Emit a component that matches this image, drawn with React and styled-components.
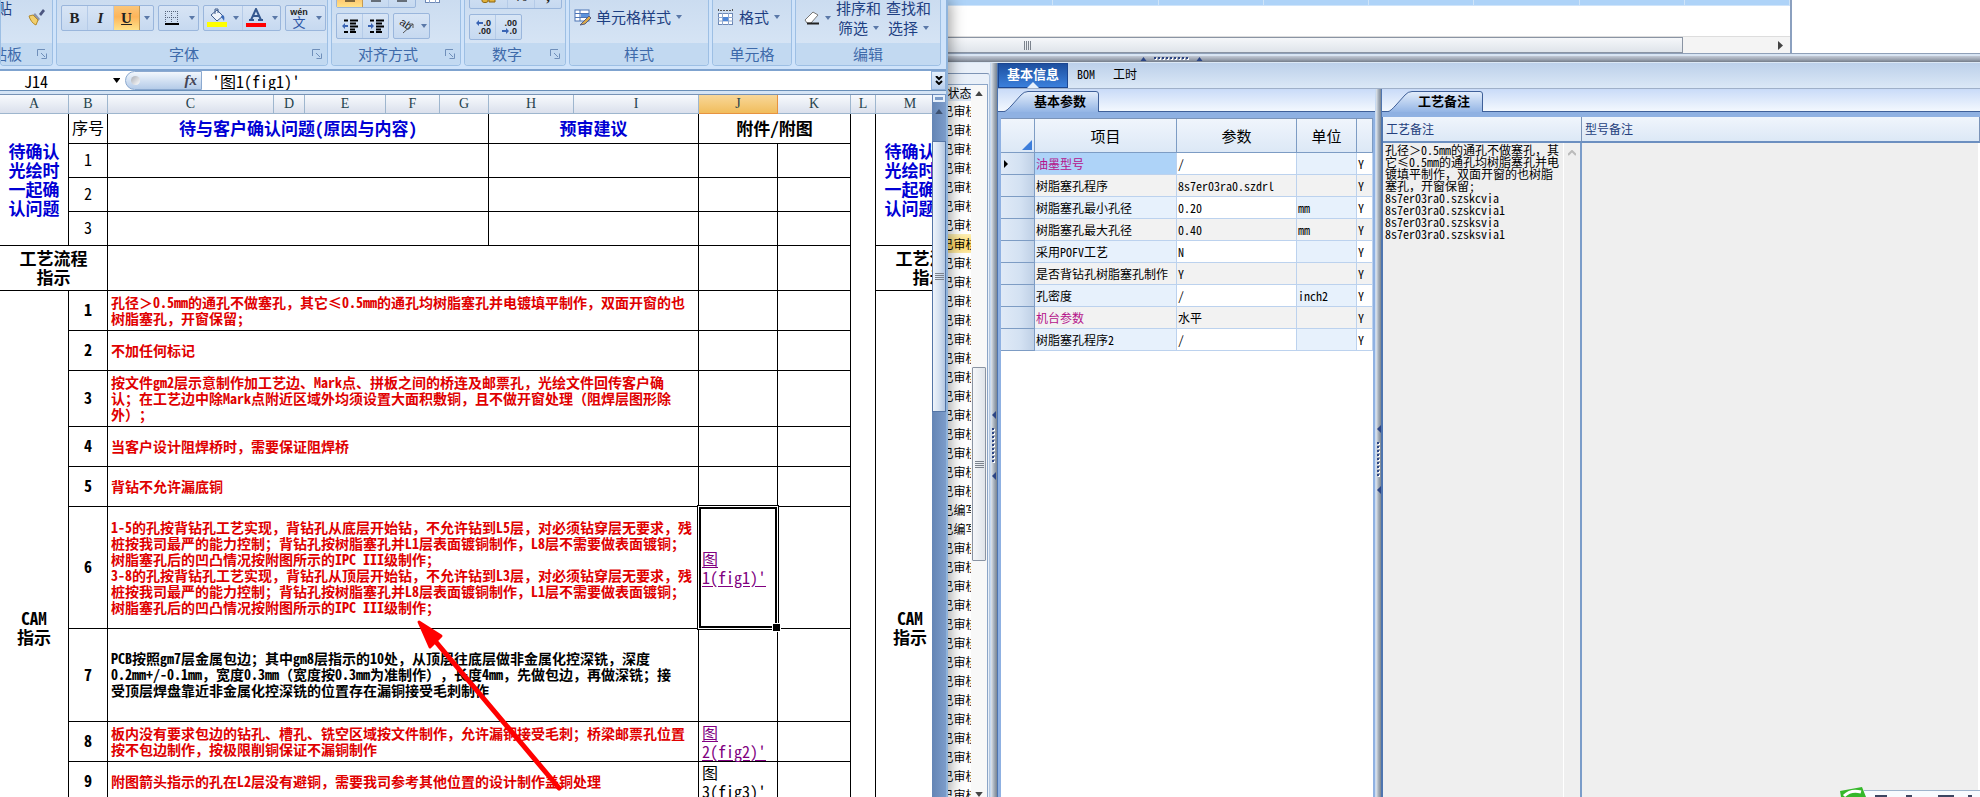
import React, { useState } from 'react';
import styled, { createGlobalStyle, css } from 'styled-components';

const GlobalStyle = createGlobalStyle`
  * {
    box-sizing: border-box;
  }
  body {
    margin: 0;
    overflow: hidden;
    background: #fff;
    font-family: "Noto Sans Mono CJK SC", "Noto Sans CJK SC", monospace;
    font-size: 12px;
    color: #000;
    text-spacing-trim: space-all;
  }
  button, input, textarea {
    font: inherit;
    color: inherit;
    border: 0;
    padding: 0;
    margin: 0;
    background: none;
    border-radius: 0;
    outline: none;
  }
`;

const Desktop = styled.div`
  display: grid;
  grid-template-columns: minmax(0, 948fr) minmax(0, 1032fr);
  height: 100vh;
  overflow: hidden;
  position: relative;
`;

/* ---------- spreadsheet window ---------- */

const SheetWindow = styled.section`
  display: flex;
  flex-direction: column;
  min-height: 0;
  border-right: 2px solid #8fb4dc;
  background: #fff;
  box-shadow: 2px 0 14px rgba(0, 0, 0, 0.4);
  position: relative;
  z-index: 2;
`;

const Ribbon = styled.header`
  display: flex;
  flex: none;
  gap: 3px;
  height: 71px;
  padding-bottom: 3px;
  overflow: hidden;
  background: #cfe3fa;
  border-bottom: 2px solid #7fa3cf;
`;

const Group = styled.div`
  display: flex;
  flex-direction: column;
  flex: none;
  width: ${({ $width }) => $width}px;
  height: 66px;
  overflow: hidden;
  border: 1px solid #9dbfe4;
  border-top: 0;
  border-radius: 0 0 4px 4px;
  background: linear-gradient(#cbdcf0, #dbe8f7);
`;

const GroupBody = styled.div`
  display: flex;
  flex-direction: column;
  justify-content: flex-end;
  gap: 5px;
  height: 43px;
  padding: 0 4px ${({ $bottom = 4 }) => $bottom}px;
  overflow: hidden;
`;

const GroupLabel = styled.div`
  display: flex;
  align-items: center;
  height: 22px;
  background: #c2d9f1;
  color: #3e6aaa;
  font-size: 15px;
  line-height: 22px;

  span {
    flex: 1;
    text-align: center;
    white-space: nowrap;
  }
`;

const Launcher = styled.button`
  display: flex;
  width: 12px;
  height: 12px;
  margin-right: 4px;
`;

const ToolRow = styled.div`
  display: flex;
  align-items: center;
  gap: 4px;
`;

const ToolSet = styled.div`
  display: flex;
  flex: none;
  height: 26px;
  border: 1px solid #9ab6dc;
  border-radius: 2px;
  background: linear-gradient(#d8e5f5, #c6d9f0);
`;

const ToolButton = styled.button`
  display: flex;
  align-items: center;
  justify-content: center;
  width: ${({ $width = 26 }) => $width}px;
  height: 24px;
  border-right: ${({ $last }) => ($last ? 0 : '1px solid #b5cbe8')};
  ${({ $active }) => $active && css`
    background: linear-gradient(#fbc67a, #fdb55a 45%, #ffe28a);
    border-right: 1px solid #c59a52;
  `}
`;

const Glyph = styled.span`
  font-family: "Liberation Serif", serif;
  font-size: 15px;
  line-height: 16px;
  font-weight: bold;
  color: #222;
  font-style: ${({ $italic }) => ($italic ? 'italic' : 'normal')};
  text-decoration: ${({ $underline }) => ($underline ? 'underline' : 'none')};
`;

const Command = styled.button`
  display: flex;
  align-items: center;
  gap: 5px;
  color: #1e3f82;
  font-size: 15px;
  line-height: 20px;
  white-space: nowrap;
`;

const StackedCommand = styled(Command)`
  flex-direction: column;
  gap: 0;

  span {
    display: flex;
    align-items: center;
    gap: 5px;
  }
`;

const FormulaBar = styled.div`
  display: flex;
  flex: none;
  align-items: stretch;
  height: 20px;
  border-bottom: 1px solid #6a8fb8;
  background: #fff;
  font-size: 16px;
`;

const NameBox = styled.label`
  display: flex;
  align-items: center;
  width: 125px;
  padding-right: 5px;

  input {
    width: 100%;
    padding-left: 24px;
    font-size: 16px;
    line-height: 18px;
  }
`;

const FxPill = styled.div`
  display: flex;
  align-items: center;
  justify-content: space-between;
  width: 77px;
  padding: 0 4px 0 5px;
  border: 1px solid #8ba9d0;
  border-radius: 10px 0 0 10px;
  background: linear-gradient(#f2f7fd, #b4cbe8);
  font: italic bold 15px "Liberation Serif", serif;
  color: #445;
`;

const Knob = styled.i`
  width: 9px;
  height: 9px;
  border-radius: 50%;
  background: linear-gradient(135deg, #a9adb5, #fff);
`;

const FormulaInput = styled.input`
  flex: 1;
  min-width: 0;
  padding-left: 10px;
  font-size: 16px;
`;

const ExpandButton = styled.button`
  display: flex;
  align-items: center;
  justify-content: center;
  width: 15px;
  border: 1px solid #8fb0da;
  background: linear-gradient(#e4effb, #b8cfee);
`;

const SheetArea = styled.div`
  display: flex;
  flex: 1;
  min-height: 0;
  padding-top: 3px;
  background: #d5e4f5;
`;

const SheetViewport = styled.div`
  flex: 1;
  min-width: 0;
  overflow: hidden;
  border-top: 1px solid #7792b5;
  background: #fff;
`;

const SheetTable = styled.table`
  table-layout: fixed;
  width: 984px;
  border-collapse: separate;
  border-spacing: 0;
`;

const ColumnHead = styled.th`
  height: 19px;
  padding: 0;
  font-family: "Liberation Serif", serif;
  font-size: 14px;
  line-height: 18px;
  font-weight: normal;
  color: #24424c;
  border-right: 1px solid ${({ $active }) => ($active ? '#e79340' : '#9eb6ce')};
  border-bottom: 1px solid ${({ $active }) => ($active ? '#e79340' : '#9eb6ce')};
  background: ${({ $active }) =>
    $active ? 'linear-gradient(#f8d799, #f1bd5c)' : 'linear-gradient(#f8fafd, #dae0ec)'};
`;

const SheetRow = styled.tr`
  height: ${({ $height }) => $height}px;
`;

const Cell = styled.td`
  position: relative;
  padding: 0 0 2px;
  text-align: center;
  vertical-align: middle;
  font-size: 16px;
  line-height: 19px;
  white-space: pre;
  font-weight: ${({ $bold }) => ($bold ? 'bold' : 'normal')};
  border-right: 1px solid #000;
  border-bottom: ${({ $open }) => ($open ? '0' : '1px solid #000')};
`;

const TitleCell = styled(Cell)`
  font-size: 17px;
  font-weight: bold;
  color: ${({ $color = '#0000d4' }) => $color};
`;

const NoteCell = styled(Cell)`
  padding-left: 3px;
  text-align: left;
  font-size: 14px;
  line-height: 16px;
  font-weight: bold;
  color: ${({ $color = '#e00000' }) => $color};
`;

const LinkCell = styled(Cell)`
  padding: 0 0 0 3px;
  text-align: left;
  ${({ $selected }) => $selected && css`
    z-index: 1;

    &::before {
      content: '';
      position: absolute;
      right: -4px;
      bottom: -4px;
      z-index: 1;
      width: 7px;
      height: 7px;
      border: 1px solid #fff;
      background: #000;
    }
    &::after {
      content: '';
      position: absolute;
      inset: -2px;
      border: 1px solid #000;
      box-shadow: inset 0 0 0 1px #fff, inset 0 0 0 3px #000;
    }
  `}

  a {
    color: ${({ $plain }) => ($plain ? '#000' : '#800080')};
    text-decoration: ${({ $plain }) => ($plain ? 'none' : 'underline')};
    text-underline-offset: 2px;
  }
`;

const SheetScroll = styled.div`
  display: flex;
  flex-direction: column;
  align-items: center;
  width: 14px;
  background: linear-gradient(90deg, #6485b5, #7c9cca);
`;

const SplitHandle = styled.div`
  width: 12px;
  height: 7px;
  margin: 1px 0 7px;
  border: 2px solid #e6f0fb;
  background: #7a9bc8;
`;

const SheetThumb = styled.div`
  display: flex;
  align-items: center;
  justify-content: center;
  width: 14px;
  height: 271px;
  margin-top: 27px;
  border: 1px solid #5576a6;
  background: linear-gradient(90deg, #eef4fb, #d6e2f1 50%, #b4c8e2);
`;

/* ---------- engineering system window ---------- */

const SystemWindow = styled.section`
  display: flex;
  flex-direction: column;
  min-width: 0;
  min-height: 0;
  background: #e4edf8;
`;

const TopPane = styled.div`
  flex: none;
  height: 56px;
  background: #fff;
  border-bottom: 1px solid #5d6e88;
`;

const TopList = styled.div`
  width: calc(100% - 188px);
  height: 53px;
  border-right: 2px solid #8ba0bf;
`;

const TopSelected = styled.div`
  display: flex;
  height: 6px;
  background: #aed3f8;
  border-bottom: 1px solid #cfe4fa;

  i {
    flex: 1;
    border-right: 1px solid #cfe4f8;
  }
`;

const HorizontalScroll = styled.div`
  display: flex;
  align-items: center;
  justify-content: space-between;
  height: 17px;
  margin-top: 30px;
  padding-right: 7px;
  background: #f4f4f4;
  border-top: 1px solid #ddd;
`;

const HorizontalThumb = styled.div`
  display: flex;
  align-items: center;
  justify-content: center;
  width: 88%;
  height: 16px;
  padding-right: 574px;
  border: 1px solid #8a94a3;
  border-left: 0;
  background: linear-gradient(#f5f7fa, #dfe4ea);
`;

const PaneLines = styled.div`
  height: 3px;
  border-top: 1px solid #8fa0b8;
  background: #d8e4f2;
`;

const RowSplitter = styled.div`
  display: flex;
  flex: none;
  align-items: center;
  height: 7px;
  padding-left: 192px;
  gap: 7px;
  background: linear-gradient(#c3cad6, #98a0ad 60%, #747d8a);
  border-bottom: 1px solid #dce8f5;
`;

const Workspace = styled.div`
  display: flex;
  flex: 1;
  min-height: 0;
`;

const StatusPane = styled.aside`
  display: flex;
  flex: none;
  flex-direction: column;
  width: 42px;
  padding-top: 10px;
  background: #e9f0f9;
`;

const StatusFrame = styled.div`
  display: flex;
  flex: 1;
  min-height: 0;
  padding: 10px 0 0;
  border-top: 1px solid #7d94b5;
  border-right: 1px solid #b3c7e0;
  border-top-right-radius: 3px;
`;

const StatusList = styled.div`
  width: 23px;
  overflow: hidden;
  border-top: 1px solid #8ba5c8;
  background: #fff;
`;

const StatusItem = styled.div`
  display: flex;
  align-items: center;
  justify-content: center;
  height: 19px;
  overflow: hidden;
  font-size: 12px;
  line-height: 18px;
  white-space: nowrap;
  background: ${({ $active }) => ($active ? 'linear-gradient(#fdf0b8, #ffd75f 60%, #fbe9a8)' : '#fff')};
`;

const StatusHead = styled(StatusItem)`
  height: 16px;
  background: linear-gradient(#f4f8fd, #dbe6f4);
`;

const StatusScroll = styled.div`
  display: flex;
  flex-direction: column;
  align-items: center;
  width: 17px;
  padding-top: 6px;
  border-top: 1px solid #8ba5c8;
  border-right: 1px solid #8ba5c8;
  background: #f8f8f8;
`;

const StatusThumb = styled.div`
  display: flex;
  flex: none;
  align-items: center;
  justify-content: center;
  width: 14px;
  height: 194px;
  margin: 271px 0 231px;
  border: 1px solid #8a94a3;
  border-radius: 1px;
  background: linear-gradient(90deg, #f5f7fa, #dfe4ea);
`;

const ColumnSplitter = styled.div`
  display: flex;
  flex: none;
  flex-direction: column;
  align-items: center;
  gap: 9px;
  width: ${({ $width }) => $width}px;
  padding-top: ${({ $top }) => $top}px;
  border-left: 1px solid #c7daf2;
  border-right: 1px solid #4e75b0;
  background: linear-gradient(90deg, #dfe6ee, #a5afbb 50%, #7a8592);
`;

const Main = styled.div`
  display: flex;
  flex: 1;
  flex-direction: column;
  min-width: 0;
`;

const MainTabs = styled.nav`
  display: flex;
  flex: none;
  height: 26px;
  border-bottom: 1px solid #9fb0c9;
  background: linear-gradient(#bcd0ea, #dbe8f6);
`;

const MainTab = styled.button`
  position: relative;
  padding: 0 ${({ $pad = 10 }) => $pad}px 3px;
  font-size: ${({ $active }) => ($active ? 13 : 12)}px;
  line-height: 20px;
  ${({ $active }) => $active && css`
    color: #fff;
    font-weight: bold;
    border: 1px solid #1c4690;
    background: linear-gradient(#1d4f9f, #3b80dc);

    &::after {
      content: '';
      position: absolute;
      left: 50%;
      bottom: -1px;
      margin-left: -6px;
      border: 6px solid transparent;
      border-top: 0;
      border-bottom-color: #e6effb;
    }
  `}
`;

const Panels = styled.div`
  display: grid;
  flex: 1;
  grid-template-columns: minmax(0, 377fr) 7px minmax(0, 598fr);
  min-height: 0;
`;

const Panel = styled.div`
  display: flex;
  flex-direction: column;
  min-width: 0;
  min-height: 0;
`;

const PanelTabs = styled.div`
  display: flex;
  align-items: flex-end;
  flex: none;
  height: 23px;
  padding-left: 5px;
  border-bottom: 1px solid #3f6099;
  background: linear-gradient(#c9dbf8, #f3f8fe);
`;

const PanelTab = styled.button`
  position: relative;
  width: 96px;
  height: 21px;
  margin-bottom: -1px;
  padding: 0 0 2px 31px;
  text-align: left;
  font-size: 13px;
  line-height: 18px;
  font-weight: bold;

  svg {
    position: absolute;
    left: 0;
    top: 0;
  }
  span {
    position: relative;
  }
`;

const PanelBody = styled.div`
  display: flex;
  flex: 1;
  flex-direction: column;
  min-height: 0;
  padding: 6px 2px 0 3px;
  background: #8fb1e2;
`;

const ParamSurface = styled.div`
  flex: 1;
  border-top: 1px solid #7a93b8;
  background: #fff;
`;

const ParamTable = styled.table`
  table-layout: fixed;
  width: 100%;
  border-collapse: separate;
  border-spacing: 0;
`;

const ParamHead = styled.th`
  height: 34px;
  padding: 0;
  font-size: 15px;
  font-weight: normal;
  vertical-align: ${({ $corner }) => ($corner ? 'bottom' : 'middle')};
  text-align: ${({ $corner }) => ($corner ? 'right' : 'center')};
  line-height: ${({ $corner }) => ($corner ? 1 : '32px')};
  border-right: 1px solid #7d9cc4;
  border-bottom: 1px solid #7d9cc4;
  background: linear-gradient(#f0f5fc, #dce8f6);

  svg {
    display: block;
    margin: 0 2px 2px auto;
  }
`;

const ParamCell = styled.td`
  height: 22px;
  padding: 0 0 0 1px;
  font-size: 12px;
  line-height: 21px;
  white-space: nowrap;
  overflow: hidden;
  color: ${({ $accent }) => ($accent ? '#b5128a' : '#000')};
  border-right: 1px solid #bcd2ee;
  border-bottom: 1px solid #bcd2ee;
  background: ${({ $bg }) => $bg};
`;

const RowHeadCell = styled(ParamCell)`
  padding-left: 3px;
  border-color: #7d9cc4;
  background: linear-gradient(90deg, #e0eaf7, #d3e1f2 60%, #bfd0e6);

  svg {
    display: block;
  }
`;

const RemarkBody = styled.div`
  display: grid;
  flex: 1;
  grid-template-columns: 199px minmax(0, 1fr);
  grid-template-rows: 26px minmax(0, 1fr);
  margin-top: 5px;
  border-left: 1px solid #4e75b0;
  background: #efefef;
`;

const RemarkFrame = styled(PanelBody)`
  padding: 0;
`;

const RemarkHead = styled.label`
  padding-left: 3px;
  font-size: 12px;
  line-height: 24px;
  color: #243f7d;
  border-right: 1px solid #7a93b8;
  border-bottom: 2px solid #6c8fc0;
  background: linear-gradient(#f0f5fc, #dce8f6);
`;

const RemarkField = styled.div`
  display: flex;
  border-right: 2px solid ${({ $last }) => ($last ? '#fff' : '#7a9cc9')};
`;

const RemarkText = styled.textarea`
  flex: 1;
  min-width: 0;
  padding: 1px 0 0 2px;
  resize: none;
  overflow: hidden;
  white-space: pre;
  font-size: 12px;
  line-height: 12px;
`;

const RemarkScroll = styled.div`
  display: flex;
  justify-content: center;
  width: 17px;
  padding-top: 7px;
  border-left: 1px solid #fff;
`;

const Arrow = styled.svg`
  position: absolute;
  left: 410px;
  top: 614px;
  z-index: 3;
  pointer-events: none;
`;

const InputMethodBar = styled.div`
  position: absolute;
  right: 0;
  bottom: 0;
  z-index: 3;
  display: flex;
  width: 140px;
  height: 10px;
  overflow: hidden;

  svg {
    flex: none;
  }
`;

const Caret = ({ color = '#5a78a8', size = 6, up }) => (
  <svg width={size} height={size / 2 + 1} viewBox="0 0 6 4">
    <path d={up ? 'M0 4h6L3 0z' : 'M0 0h6L3 4z'} fill={color} />
  </svg>
);

const LeftMark = () => (
  <svg width="4" height="8" viewBox="0 0 4 8">
    <path d="M4 0v8L0 4z" fill="#2c4585" />
  </svg>
);

const Grip = ({ vertical = false }) => (
  <svg width="9" height="9">
    {[1, 3, 5, 7].map(n => (
      <path key={n} d={vertical ? `M${n + 0.5} 0v9` : `M0 ${n + 0.5}h9`} stroke="#7b828c" />
    ))}
  </svg>
);

const Dots = ({ vertical }) => (
  <svg width={vertical ? 4 : 35} height={vertical ? 35 : 4}>
    {[...Array(9)].map((_, i) => (
      <g key={i} transform={vertical ? `translate(0 ${i * 4})` : `translate(${i * 4} 0)`}>
        <rect x="1" y="1" width="2" height="2" fill="#fff" />
        <rect width="2" height="2" fill="#2c4585" />
      </g>
    ))}
  </svg>
);

const LaunchIcon = () => (
  <svg width="12" height="12" viewBox="0 0 12 12" fill="none" stroke="#6f8fba">
    <path d="M1.5 8V1.5H9M5 5l4 4M10.5 5.5v5h-5" />
  </svg>
);

const BrushIcon = () => (
  <svg width="18" height="18" viewBox="0 0 18 18">
    <path d="M11 6l4-5 2 2-4 5z" fill="#4c5680" />
    <path d="M7 5l5 6-2 2-6-5z" fill="#8d94a8" />
    <path d="M1 8l4-1 5 5-2 5C5 16 2 12 1 8z" fill="#f2cf6c" stroke="#b58a2a" />
  </svg>
);

const BorderIcon = () => (
  <svg width="14" height="14" viewBox="0 0 14 14" fill="none" stroke="#56647c">
    <path d="M.5 0v13M6.5 0v13M12.5 0v13M0 .5h13M0 6.5h13" strokeDasharray="1 1" />
    <path d="M0 13h14" stroke="#000" strokeWidth="2" />
  </svg>
);

const FillIcon = () => (
  <svg width="22" height="20" viewBox="0 0 22 20">
    <path d="M5 7l6-5 6 6-6 5z" fill="#eef3fa" stroke="#3f5c8d" />
    <path d="M9 6V1h3v4" fill="none" stroke="#3f5c8d" />
    <path d="M16 7c2 0 3 2 2 6-1-2-2-3-3-4z" fill="#3c6bb8" />
    <rect x="1" y="14" width="20" height="5" fill="#ff0" />
  </svg>
);

const FontColorIcon = () => (
  <svg width="22" height="20" viewBox="0 0 22 20">
    <path d="M6 12l5-11 5 11M8 8h6M4 12h5M13 12h5" fill="none" stroke="#35588f" strokeWidth="2" />
    <rect x="1" y="15" width="20" height="4" fill="#f00" />
  </svg>
);

const PhoneticIcon = styled.span`
  display: flex;
  flex-direction: column;
  align-items: center;
  font-size: 13px;
  line-height: 11px;
  color: #2d55a5;

  small {
    font: bold 9px/7px "Liberation Sans", sans-serif;
    color: #222;
  }
`;

const LinesIcon = ({ flip, plain }) => (
  <svg width="16" height="14" viewBox="0 0 16 14">
    {plain ? (
      <path d="M1 1.5h14M1 5.500h9M1 9.5h14M3 13h10" stroke="#000" fill="none" />
    ) : (
      <>
        <path d="M2 1.5h4M8 1.5h8M8 4.5h6M8 7.5h8M8 10.5h5M2 13h4M8 13h6" stroke="#000" strokeWidth="2" fill="none" />
        <path d={flip ? 'M6 7L3 4v2H0v2h3v2z' : 'M0 7l3-3v2h3v2H3v2z'} fill="#3a64b4" />
      </>
    )}
  </svg>
);

const AngleIcon = () => (
  <svg width="17" height="16" viewBox="0 0 17 16">
    <text x="1" y="9" transform="rotate(35 6 7)" fontSize="11" fontFamily="Liberation Sans" fill="#222">ab</text>
    <path d="M5 15L15 6M15 10V6h-4" fill="none" stroke="#555" />
  </svg>
);

const DecimalIcon = styled.span`
  display: flex;
  flex-direction: column;
  align-items: flex-end;
  width: 17px;
  font: bold 9px/8px "Liberation Sans", sans-serif;
  color: #222;

  span {
    display: flex;
    align-items: center;
  }
`;

const DecimalArrow = ({ right }) => (
  <svg width="7" height="6" viewBox="0 0 7 6">
    <path d={right ? 'M7 3L4 0v2H0v2h4v2z' : 'M0 3l3-3v2h4v2H3v2z'} fill="#3a64b4" />
  </svg>
);

const StyleIcon = () => (
  <svg width="17" height="17" viewBox="0 0 17 17">
    <rect x="1" y="1" width="14" height="11" fill="#fff" stroke="#4d74b5" />
    <path d="M1 4.5h14M1 8.5h14M6 1v11" stroke="#4d74b5" fill="none" />
    <path d="M7 5h8v3H7z" fill="#5d93dc" />
    <path d="M15 7l-6 6-3 3 5-1 6-6z" fill="#d9a84a" stroke="#5a5f7c" />
  </svg>
);

const FormatIcon = () => (
  <svg width="17" height="17" viewBox="0 0 17 17">
    <path d="M1.5 0v3M15.5 0v3M3 1.5h11" stroke="#555" strokeDasharray="2 1" fill="none" />
    <rect x="1.5" y="4.5" width="14" height="11" fill="#fff" stroke="#6d88b5" />
    <path d="M1 8.5h15M1 12h15M5.5 4v12M11.5 4v12" stroke="#8fa8cf" fill="none" />
    <rect x="6" y="8" width="5" height="4" fill="#4d86d8" />
  </svg>
);

const EraserIcon = () => (
  <svg width="16" height="14" viewBox="0 0 16 14">
    <path d="M1 9l8-8 5 3-7 8H3z" fill="#fff" stroke="#777" />
    <path d="M3 12.5h12" stroke="#222" strokeWidth="2" />
  </svg>
);

const TabShape = () => (
  <svg width="96" height="21" viewBox="0 0 96 21">
    <defs>
      <linearGradient id="tab-fill" x1="0" y1="0" x2="0" y2="1">
        <stop offset="0" stopColor="#e4eefb" />
        <stop offset="1" stopColor="#94b5e5" />
      </linearGradient>
    </defs>
    <path d="M0 21C4 20 6 17 9 14L18 4Q21 .5 25 .5H93Q95.5 .5 95.5 3V21" fill="url(#tab-fill)" stroke="#3f6099" />
  </svg>
);

const columns = [
  ['A', 69], ['B', 39], ['C', 166], ['D', 31], ['E', 81], ['F', 54], ['G', 49],
  ['H', 85], ['I', 125], ['J', 79], ['K', 73], ['L', 25], ['M', 69], ['N', 39],
];

const cleared = '待确认\n光绘时\n一起确\n认问题';

const camRows = [
  { height: 40, text: '孔径＞0.5mm的通孔不做塞孔，其它≤0.5mm的通孔均树脂塞孔并电镀填平制作，双面开窗的也\n树脂塞孔，开窗保留;' },
  { height: 40, text: '不加任何标记' },
  { height: 56, text: '按文件gm2层示意制作加工艺边、Mark点、拼板之间的桥连及邮票孔，光绘文件回传客户确\n认；在工艺边中除Mark点附近区域外均须设置大面积敷铜，且不做开窗处理（阻焊层图形除\n外）；' },
  { height: 40, text: '当客户设计阻焊桥时，需要保证阻焊桥' },
  { height: 40, text: '背钻不允许漏底铜' },
  {
    height: 122,
    link: "图\n1(fig1)'",
    selected: true,
    text: '1-5的孔按背钻孔工艺实现，背钻孔从底层开始钻，不允许钻到L5层，对必须钻穿层无要求，残\n桩按我司最严的能力控制；背钻孔按树脂塞孔并L1层表面镀铜制作，L8层不需要做表面镀铜；\n树脂塞孔后的凹凸情况按附图所示的IPC III级制作；\n3-8的孔按背钻孔工艺实现，背钻孔从顶层开始钻，不允许钻到L3层，对必须钻穿层无要求，残\n桩按我司最严的能力控制；背钻孔按树脂塞孔并L8层表面镀铜制作，L1层不需要做表面镀铜；\n树脂塞孔后的凹凸情况按附图所示的IPC III级制作；',
  },
  {
    height: 93,
    color: '#000',
    text: 'PCB按照gm7层金属包边；其中gm8层指示的10处，从顶层往底层做非金属化控深铣，深度\n0.2mm+/-0.1mm，宽度0.3mm（宽度按0.3mm为准制作），长度4mm，先做包边，再做深铣；接\n受顶层焊盘靠近非金属化控深铣的位置存在漏铜接受毛刺制作',
  },
  {
    height: 40,
    link: "图\n2(fig2)'",
    text: '板内没有要求包边的钻孔、槽孔、铣空区域按文件制作，允许漏铜接受毛刺；桥梁邮票孔位置\n按不包边制作，按极限削铜保证不漏铜制作',
  },
  {
    height: 40,
    link: "图\n3(fig3)'",
    plain: true,
    text: '附图箭头指示的孔在L2层没有避铜，需要我司参考其他位置的设计制作盖铜处理',
  },
];

const params = [
  { name: '油墨型号', value: '/', unit: '', accent: true },
  { name: '树脂塞孔程序', value: '8s7er03ra0.szdrl', unit: '' },
  { name: '树脂塞孔最小孔径', value: '0.20', unit: 'mm' },
  { name: '树脂塞孔最大孔径', value: '0.40', unit: 'mm' },
  { name: '采用POFV工艺', value: 'N', unit: '' },
  { name: '是否背钻孔树脂塞孔制作', value: 'Y', unit: '' },
  { name: '孔密度', value: '/', unit: 'inch2' },
  { name: '机台参数', value: '水平', unit: '', accent: true },
  { name: '树脂塞孔程序2', value: '/', unit: '' },
];

const remark = [
  '孔径＞0.5mm的通孔不做塞孔，其',
  '它≤0.5mm的通孔均树脂塞孔并电',
  '镀填平制作，双面开窗的也树脂',
  '塞孔，开窗保留;',
  '8s7er03ra0.szskcvia',
  '8s7er03ra0.szskcvia1',
  '8s7er03ra0.szsksvia',
  '8s7er03ra0.szsksvia1',
].join('\n');

const statuses = [...Array(37)].map((_, i) => (i === 21 || i === 22 ? '已编写' : '已审核'));

const ClipBody = styled(GroupBody)`
  flex-direction: row;
  align-items: flex-start;
  justify-content: flex-end;
  gap: 16px;
  padding: 0 6px 0 0;
  color: #1e3f82;
  font-size: 15px;
  line-height: 16px;

  span {
    flex: none;
    white-space: nowrap;
  }
  svg {
    flex: none;
    margin-top: 8px;
  }
`;

const ClipLabel = styled(GroupLabel)`
  justify-content: flex-end;
  gap: 14px;

  span, button {
    flex: none;
  }
`;

const EditRow = styled(ToolRow)`
  gap: 5px;
  padding-left: 4px;
`;

const RibbonGroup = ({ width, label, bottom, launcher, children }) => (
  <Group $width={width}>
    <GroupBody $bottom={bottom}>{children}</GroupBody>
    <GroupLabel>
      <span>{label}</span>
      {launcher && <Launcher aria-label={`${label}选项`}><LaunchIcon /></Launcher>}
    </GroupLabel>
  </Group>
);

const ExcelRibbon = () => (
  <Ribbon>
    <Group $width={53}>
      <ClipBody>
        <span>粘贴</span>
        <BrushIcon />
      </ClipBody>
      <ClipLabel>
        <span>剪贴板</span>
        <Launcher aria-label="剪贴板选项"><LaunchIcon /></Launcher>
      </ClipLabel>
    </Group>
    <RibbonGroup width={272} label="字体" bottom={12} launcher>
      <ToolRow>
        <ToolSet>
          <ToolButton><Glyph>B</Glyph></ToolButton>
          <ToolButton><Glyph $italic>I</Glyph></ToolButton>
          <ToolButton $active><Glyph $underline>U</Glyph></ToolButton>
          <ToolButton $width={13} $last aria-label="下划线样式"><Caret /></ToolButton>
        </ToolSet>
        <ToolSet>
          <ToolButton $last aria-label="边框"><BorderIcon /></ToolButton>
          <ToolButton $width={13} $last aria-label="边框样式"><Caret /></ToolButton>
        </ToolSet>
        <ToolSet>
          <ToolButton aria-label="填充颜色" $last><FillIcon /></ToolButton>
          <ToolButton $width={13} aria-label="更多填充"><Caret /></ToolButton>
          <ToolButton aria-label="字体颜色" $last><FontColorIcon /></ToolButton>
          <ToolButton $width={11} $last aria-label="更多颜色"><Caret /></ToolButton>
        </ToolSet>
        <ToolSet>
          <ToolButton $last><PhoneticIcon><small>wén</small>文</PhoneticIcon></ToolButton>
          <ToolButton $width={13} $last aria-label="拼音选项"><Caret /></ToolButton>
        </ToolSet>
      </ToolRow>
    </RibbonGroup>
    <RibbonGroup width={130} label="对齐方式" launcher>
      <ToolRow>
        <ToolSet>
          <ToolButton $active aria-label="左对齐"><LinesIcon plain /></ToolButton>
          <ToolButton aria-label="居中"><LinesIcon plain /></ToolButton>
          <ToolButton $last aria-label="右对齐"><LinesIcon plain /></ToolButton>
        </ToolSet>
        <ToolButton $width={24} $last aria-label="合并单元格"><FormatIcon /></ToolButton>
      </ToolRow>
      <ToolRow>
        <ToolSet>
          <ToolButton aria-label="减少缩进"><LinesIcon /></ToolButton>
          <ToolButton $width={25} $last aria-label="增加缩进"><LinesIcon flip /></ToolButton>
        </ToolSet>
        <ToolSet>
          <ToolButton $width={24} $last aria-label="方向"><AngleIcon /></ToolButton>
          <ToolButton $width={11} $last aria-label="方向选项"><Caret /></ToolButton>
        </ToolSet>
      </ToolRow>
    </RibbonGroup>
    <RibbonGroup width={102} label="数字" launcher bottom={3}>
      <ToolRow>
        <ToolSet>
          <ToolButton $width={38} aria-label="货币">
            <svg width="16" height="14" viewBox="0 0 16 14">
              <path d="M6 1h9v5H6zM1 9c0-2 6-2 6 0v3c0 2-6 2-6 0zM8 9h6v4H8z" fill="#e2b23c" stroke="#8c6510" />
            </svg>
          </ToolButton>
          <ToolButton $width={27}><Glyph>%</Glyph></ToolButton>
          <ToolButton $width={26} $last><Glyph>,</Glyph></ToolButton>
        </ToolSet>
      </ToolRow>
      <ToolRow>
        <ToolSet>
          <ToolButton>
            <DecimalIcon><span><DecimalArrow />.0</span><span>.00</span></DecimalIcon>
          </ToolButton>
          <ToolButton $width={25} $last>
            <DecimalIcon><span>.00</span><span><DecimalArrow right />.0</span></DecimalIcon>
          </ToolButton>
        </ToolSet>
      </ToolRow>
    </RibbonGroup>
    <RibbonGroup width={140} label="样式" bottom={16}>
      <ToolRow>
        <Command><StyleIcon />单元格样式<Caret /></Command>
      </ToolRow>
    </RibbonGroup>
    <RibbonGroup width={80} label="单元格" bottom={16}>
      <ToolRow>
        <Command><FormatIcon />格式<Caret /></Command>
      </ToolRow>
    </RibbonGroup>
    <RibbonGroup width={146} label="编辑" bottom={5}>
      <EditRow>
        <Command aria-label="清除"><EraserIcon /><Caret /></Command>
        <StackedCommand>排序和<span>筛选<Caret /></span></StackedCommand>
        <StackedCommand>查找和<span>选择<Caret /></span></StackedCommand>
      </EditRow>
    </RibbonGroup>
  </Ribbon>
);

const Spreadsheet = () => (
  <SheetTable>
    <colgroup>
      {columns.map(([name, width]) => <col key={name} width={width} />)}
    </colgroup>
    <thead>
      <tr>
        {columns.map(([name]) => <ColumnHead key={name} scope="col" $active={name === 'J'}>{name}</ColumnHead>)}
      </tr>
    </thead>
    <tbody>
      <SheetRow $height={30}>
        <TitleCell rowSpan={4}>{cleared}</TitleCell>
        <Cell>序号</Cell>
        <TitleCell colSpan={5}>待与客户确认问题(原因与内容)</TitleCell>
        <TitleCell colSpan={2}>预审建议</TitleCell>
        <TitleCell colSpan={2} $color="#000">附件/附图</TitleCell>
        <Cell $open />
        <TitleCell rowSpan={4}>{cleared}</TitleCell>
        <Cell />
      </SheetRow>
      {[1, 2, 3].map(n => (
        <SheetRow key={n} $height={34}>
          <Cell>{n}</Cell>
          <Cell colSpan={5} />
          <Cell colSpan={2} />
          <Cell />
          <Cell />
          <Cell $open />
          <Cell />
        </SheetRow>
      ))}
      <SheetRow $height={45}>
        <TitleCell colSpan={2} $color="#000">{'工艺流程\n指示'}</TitleCell>
        <Cell colSpan={7} />
        <Cell />
        <Cell />
        <Cell $open />
        <TitleCell colSpan={2} $color="#000">{'工艺流程\n指示'}</TitleCell>
      </SheetRow>
      {camRows.map((row, i) => (
        <SheetRow key={i} $height={row.height}>
          {i === 0 && <TitleCell rowSpan={10} $color="#000">{'CAM\n指示'}</TitleCell>}
          <Cell $bold>{i + 1}</Cell>
          <NoteCell colSpan={7} $color={row.color}>{row.text}</NoteCell>
          <LinkCell $selected={row.selected} $plain={row.plain}>
            {row.link && <a href="#fig">{row.link}</a>}
          </LinkCell>
          <Cell />
          <Cell $open />
          {i === 0 && <TitleCell rowSpan={10} $color="#000">{'CAM\n指示'}</TitleCell>}
          <Cell />
        </SheetRow>
      ))}
      <SheetRow $height={163}>
        <Cell />
        <Cell colSpan={7} />
        <Cell />
        <Cell />
        <Cell $open />
        <Cell />
      </SheetRow>
    </tbody>
  </SheetTable>
);

const ParamGrid = () => (
  <ParamTable>
    <colgroup>
      <col width="34" />
      <col width="142" />
      <col width="120" />
      <col width="60" />
      <col />
    </colgroup>
    <thead>
      <tr>
        <ParamHead $corner>
          <svg width="10" height="10"><path d="M10 0v10H0z" fill="#3d7edb" /></svg>
        </ParamHead>
        <ParamHead>项目</ParamHead>
        <ParamHead>参数</ParamHead>
        <ParamHead>单位</ParamHead>
        <ParamHead />
      </tr>
    </thead>
    <tbody>
      {params.map((p, i) => {
        const odd = i % 2 === 1;
        const tint = odd ? '#f2f2f2' : '#e7f1fc';
        const plain = odd ? '#f2f2f2' : '#fff';
        return (
          <tr key={p.name}>
            <RowHeadCell>
              {i === 0 && <svg width="5" height="8"><path d="M0 0l4 4-4 4z" /></svg>}
            </RowHeadCell>
            <ParamCell $bg={i === 0 ? '#aed3f8' : tint} $accent={p.accent}>{p.name}</ParamCell>
            <ParamCell $bg={plain}>{p.value}</ParamCell>
            <ParamCell $bg={tint}>{p.unit}</ParamCell>
            <ParamCell $bg={plain}>Y</ParamCell>
          </tr>
        );
      })}
    </tbody>
  </ParamTable>
);

const App = () => {
  const [tab, setTab] = useState('基本信息');

  return (
    <Desktop>
      <GlobalStyle />
      <SheetWindow>
        <ExcelRibbon />
        <FormulaBar>
          <NameBox>
            <input aria-label="名称框" defaultValue="J14" />
            <Caret color="#000" size={8} />
          </NameBox>
          <FxPill><Knob /><span>fx</span></FxPill>
          <FormulaInput aria-label="编辑栏" defaultValue="'图1(fig1)'" />
          <ExpandButton aria-label="展开编辑栏">
            <svg width="8" height="9" fill="none" stroke="#000" strokeWidth="2">
              <path d="M1 0l3 3 3-3M1 5l3 3 3-3" />
            </svg>
          </ExpandButton>
        </FormulaBar>
        <SheetArea>
          <SheetViewport><Spreadsheet /></SheetViewport>
          <SheetScroll>
            <SplitHandle />
            <Caret up color="#3d5170" size={8} />
            <SheetThumb><Grip /></SheetThumb>
          </SheetScroll>
        </SheetArea>
      </SheetWindow>

      <SystemWindow>
        <TopPane>
          <TopList>
            <TopSelected><i /><i /><i /><i /><i /><i /><i /><i /></TopSelected>
            <HorizontalScroll>
              <HorizontalThumb><Grip vertical /></HorizontalThumb>
              <svg width="5" height="9"><path d="M0 0l5 4.5L0 9z" fill="#444" /></svg>
            </HorizontalScroll>
          </TopList>
          <PaneLines />
        </TopPane>
        <RowSplitter>
          <Caret up color="#2c4585" size={7} />
          <Dots />
          <Caret up color="#2c4585" size={7} />
        </RowSplitter>
        <Workspace>
          <StatusPane>
            <StatusFrame>
              <StatusList>
                <StatusHead>状态</StatusHead>
                {statuses.map((s, i) => <StatusItem key={i} $active={i === 7}>{s}</StatusItem>)}
              </StatusList>
              <StatusScroll>
                <Caret up color="#444" size={8} />
                <StatusThumb><Grip /></StatusThumb>
                <Caret color="#444" size={8} />
              </StatusScroll>
            </StatusFrame>
          </StatusPane>
          <ColumnSplitter $width={8} $top={348}>
            <LeftMark />
            <Dots vertical />
            <LeftMark />
          </ColumnSplitter>
          <Main>
            <MainTabs>
              {['基本信息', 'BOM', '工时'].map(name => (
                <MainTab key={name} $active={tab === name} $pad={name === '基本信息' ? 8 : 9} onClick={() => setTab(name)}>
                  {name}
                </MainTab>
              ))}
            </MainTabs>
            <Panels>
              <Panel>
                <PanelTabs>
                  <PanelTab><TabShape /><span>基本参数</span></PanelTab>
                </PanelTabs>
                <PanelBody>
                  <ParamSurface><ParamGrid /></ParamSurface>
                </PanelBody>
              </Panel>
              <ColumnSplitter $width={7} $top={336}>
                <LeftMark />
                <Dots vertical />
                <LeftMark />
              </ColumnSplitter>
              <Panel>
                <PanelTabs>
                  <PanelTab><TabShape /><span>工艺备注</span></PanelTab>
                </PanelTabs>
                <RemarkFrame>
                  <RemarkBody>
                    <RemarkHead htmlFor="process-remark">工艺备注</RemarkHead>
                    <RemarkHead htmlFor="model-remark">型号备注</RemarkHead>
                    <RemarkField>
                      <RemarkText id="process-remark" readOnly value={remark} />
                      <RemarkScroll>
                        <svg width="8" height="6" fill="none" stroke="#bbb" strokeWidth="2"><path d="M0 5l4-4 4 4" /></svg>
                      </RemarkScroll>
                    </RemarkField>
                    <RemarkField $last>
                      <RemarkText id="model-remark" readOnly value="" />
                    </RemarkField>
                  </RemarkBody>
                </RemarkFrame>
              </Panel>
            </Panels>
          </Main>
        </Workspace>
      </SystemWindow>

      <Arrow width="160" height="180" viewBox="0 0 160 180">
        <path d="M26 28L149 174" stroke="#f00" strokeWidth="5" strokeLinecap="round" />
        <path d="M9 8L31 22L20 33Z" fill="#f00" stroke="#f00" strokeWidth="3" strokeLinejoin="round" />
      </Arrow>

      <InputMethodBar>
        <svg width="140" height="10">
          <path d="M24 4h116v6H24z" fill="#f8fbfe" />
          <path d="M24 3.5h116" stroke="#9fb4cc" />
          <path d="M0 4L22 0l4 10H1z" fill="#35b82a" />
          <path d="M4 9c4-4 10-6 17-4" fill="none" stroke="#fff" strokeWidth="3" />
          <path d="M35 9h12M66 9h6M98 9h16M128 9h4" stroke="#3c4560" strokeWidth="2" />
        </svg>
      </InputMethodBar>
    </Desktop>
  );
};

export default App;
